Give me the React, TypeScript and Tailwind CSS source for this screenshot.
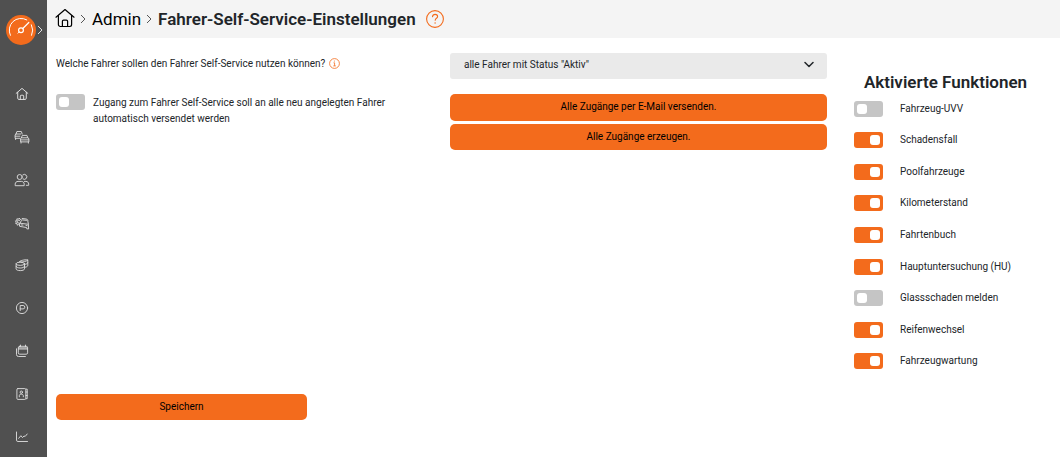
import { useState, type ReactNode } from "react";

const features = [
  { label: "Fahrzeug-UVV", active: false },
  { label: "Schadensfall", active: true },
  { label: "Poolfahrzeuge", active: true },
  { label: "Kilometerstand", active: true },
  { label: "Fahrtenbuch", active: true },
  { label: "Hauptuntersuchung (HU)", active: true },
  { label: "Glassschaden melden", active: false },
  { label: "Reifenwechsel", active: true },
  { label: "Fahrzeugwartung", active: true },
];

function HomeShape() {
  return (
    <>
      <path d="M1 9.2 10 1.5l9 7.7" />
      <path d="M3.4 7.6v9a1.9 1.9 0 0 0 1.9 1.9h9.4a1.9 1.9 0 0 0 1.9-1.9v-9" />
      <path d="M7.4 18.5v-5.2a1.2 1.2 0 0 1 1.2-1.2h2.8a1.2 1.2 0 0 1 1.2 1.2v5.2" />
    </>
  );
}

const navigation: { label: string; icon: ReactNode }[] = [
  { label: "Start", icon: <g transform="translate(1.5 1.4) scale(.65)" strokeWidth="1.5"><HomeShape /></g> },
  {
    label: "Fahrzeuge",
    icon: (
      <>
        <path d="m2 5-.9.9v3.4h4.5M2 5l.9-2.5h4.4L8.2 5M2 5h4.8M1.6 9.3v1.2M1.3 7.2h4.6" />
        <path d="m7.4 8.8.9-2.4h4.6l.9 2.4M7.4 8.8h6.4l1.1.9v3.2H6.6V9.7ZM7 12.9v1.2m7.4-1.2v1.2M7 10.9h7.6" />
      </>
    ),
  },
  {
    label: "Fahrer",
    icon: (
      <>
        <circle cx="5.7" cy="5" r="2.5" />
        <path d="M8.8 2.9A2.5 2.5 0 1 1 9 7" />
        <path d="M1.2 13.3v-1.2c0-1.6 1.2-2.7 2.8-2.7h3.4c1.6 0 2.8 1.1 2.8 2.7v1.2Z" />
        <path d="M10.4 9.4h1.5c1.7 0 2.8 1.1 2.8 2.7v1.2h-2.4" />
      </>
    ),
  },
  {
    label: "Wartung",
    icon: (
      <>
        <path d="m7 4.5-1.1-.2-.6-1.3-.9 1.2-1.5-.4-.1 1.5-1.4.6.9 1.2-.7 1.3 1.5.3.2 1.5 1.4-.7.9.9" />
        <path d="M5.9 5.8a1.5 1.5 0 1 0-1 2.3" />
        <path d="m6 8.2 1.4-2.7q.3-.7 1-.6l4.4.5q.8.1 1 .8l.6 2.8M6 8.2l8.4 1.1.2 4.7-1.8-.2-.2-1.3-5.6-.9-1-.2Z" />
        <path d="m7.4 9.9 1.5.2m3.1.4 1.2.2M8.2 3.5l4.6.6 1.1 1.2" />
      </>
    ),
  },
  {
    label: "Kosten",
    icon: (
      <>
        <ellipse cx="6.3" cy="6.8" rx="4.2" ry="1.6" />
        <path d="M2.1 6.8v5.1c0 1 1.9 1.7 4.2 1.7s4.2-.7 4.2-1.7V6.8M2.1 9.3c0 1 1.9 1.7 4.2 1.7s4.2-.7 4.2-1.7" />
        <path d="M5.3 4.6c.4-.8 5-2.2 8.5-1.7v5.5c0 .9-1 1.6-2.4 1.8M6 4.9c2.6.5 6.5-.4 7.8-1.8M11.2 7.3c1.5-.2 2.6-.8 2.6-1.5" />
      </>
    ),
  },
  {
    label: "Parken",
    icon: (
      <>
        <circle cx="8" cy="8" r="5.6" />
        <path d="M6.2 10.6V5.5h2.9a1.7 1.7 0 0 1 0 3.4H6.2" />
      </>
    ),
  },
  {
    label: "Kalender",
    icon: (
      <>
        <rect x="4.3" y="3.3" width="9.3" height="7.9" rx="1.4" />
        <path d="M4.5 4.9h8.9M4.5 6h8.9M6.5 2.1v1.4m5-1.4v1.4M2.5 5.8v5.7a2 2 0 0 0 2 2h6.9" />
      </>
    ),
  },
  {
    label: "Kontakte",
    icon: (
      <>
        <rect x="2.9" y="2.6" width="8.9" height="10.8" rx="1" />
        <path d="M12.2 3.1h1v9.6h-1M12 6h1.2M12 9.5h1.2" />
        <circle cx="7.3" cy="6.2" r="1.2" />
        <path d="M5.3 10.8V9.6c0-.8.6-1.4 2-1.4s2 .6 2 1.4v1.2" />
      </>
    ),
  },
  {
    label: "Auswertungen",
    icon: <path d="M2.5 3v8.1q0 1.4 1.4 1.4h9.6M4.7 9.3l2.2-2.6 1.6 1.9 1.6-1.7.9.7L13.2 5" />,
  },
];

function ChevronRight() {
  return (
    <svg className="h-2.5 w-1.5 shrink-0" viewBox="0 0 6 10" fill="none" stroke="currentColor" aria-hidden="true">
      <path d="m1 1 4 4-4 4" />
    </svg>
  );
}

function Separator() {
  return (
    <span className="pr-1.5 pl-[5px] text-[#555]">
      <ChevronRight />
    </span>
  );
}

function Switch({ id, initial }: { id: string; initial: boolean }) {
  const [checked, setChecked] = useState(initial);
  return (
    <span className="relative flex h-4 w-[29px] shrink-0">
      <input
        id={id}
        type="checkbox"
        role="switch"
        checked={checked}
        onChange={() => setChecked(!checked)}
        className="peer h-4 w-[29px] cursor-pointer appearance-none rounded-[3px] bg-[#c5c5c5] checked:bg-[#f36b1c]"
      />
      <span className="pointer-events-none absolute top-[3px] left-[3px] size-2.5 rounded-[3px] bg-white peer-checked:left-4" />
    </span>
  );
}

const buttonClass =
  "flex w-full cursor-pointer items-center justify-center rounded-[5px] text-black bg-[#f36b1c] hover:bg-[#e26014]";

export default function App() {
  return (
    <div className="flex min-h-screen bg-white font-['Roboto','Noto_Sans',sans-serif] text-[10px] leading-4 text-[#212529]">
      <aside className="w-[47px] shrink-0 bg-[#505050] text-[#e0e0e0]">
        <div className="flex h-[73px] items-start pt-[15px] pl-1.5">
          <a href="#dashboard" aria-label="Dashboard">
            <svg className="size-[30px]" viewBox="0 0 30 30" fill="none" stroke="#fff" strokeLinecap="round">
              <circle cx="15" cy="15" r="15" fill="#f36b1c" stroke="none" />
              <path d="M4.4 20.3A11.8 11.8 0 0 1 20.8 4.9M25.4 9.8a11.8 11.8 0 0 1 .2 10.5" />
              <circle cx="15" cy="15.3" r="2.4" strokeWidth="1.2" />
              <path d="m16.8 13.5 6-6" strokeWidth="1.2" />
              <path d="m13.2 17-1.2 1.2" />
            </svg>
          </a>
          <button type="button" aria-label="Menü öffnen" className="flex h-[30px] cursor-pointer items-center pl-px">
            <ChevronRight />
          </button>
        </div>
        <nav aria-label="Hauptmenü" className="grid h-[385px] auto-rows-fr pr-[3px]">
          {navigation.map((item) => (
            <a key={item.label} href="#" aria-label={item.label} className="flex items-center justify-center">
              <svg
                className="size-4"
                viewBox="0 0 16 16"
                fill="none"
                stroke="currentColor"
                strokeWidth=".9"
                strokeLinecap="round"
                strokeLinejoin="round"
              >
                {item.icon}
              </svg>
            </a>
          ))}
        </nav>
      </aside>

      <div className="min-w-0 flex-1">
        <header className="flex h-[38px] items-center bg-[#f4f4f4] pl-2">
          <a href="#home" aria-label="Startseite" className="text-black">
            <svg
              className="size-5"
              viewBox="0 0 20 20"
              fill="none"
              stroke="currentColor"
              strokeWidth="1.2"
              strokeLinecap="round"
              strokeLinejoin="round"
            >
              <g transform="translate(0 -1)"><HomeShape /></g>
            </svg>
          </a>
          <Separator />
          <a href="#admin" className="text-[17px] text-black">Admin</a>
          <Separator />
          <h1 className="text-[17px] font-semibold">Fahrer-Self-Service-Einstellungen</h1>
          <button type="button" aria-label="Hilfe" className="ml-2.5 cursor-pointer">
            <svg className="size-[18px]" viewBox="0 0 18 18" fill="none" stroke="#f36b1c" strokeLinecap="round">
              <circle cx="9" cy="9" r="8.4" strokeWidth="1.1" />
              <path d="M6.5 6.7c.2-1.5 1.2-2.3 2.6-2.3 1.5 0 2.5.8 2.5 2.1 0 1.8-2.4 1.8-2.4 3.8" strokeWidth="1.1" />
              <circle cx="9.1" cy="13" r=".7" fill="#f36b1c" stroke="none" />
            </svg>
          </button>
        </header>

        <main className="pt-[15px] pr-[23px] pl-[9px]">
          <form onSubmit={(event) => event.preventDefault()}>
            <div className="grid grid-cols-[394fr_404fr_183fr]">
              <div>
                <div className="flex h-[41px] items-start pt-[3px]">
                  <label htmlFor="driver-scope">Welche Fahrer sollen den Fahrer Self-Service nutzen können?</label>
                  <button type="button" aria-label="Information" className="mt-0.5 ml-1 cursor-pointer">
                    <svg className="size-[11px]" viewBox="0 0 11 11" fill="none" stroke="#f36b1c" strokeWidth=".8">
                      <circle cx="5.5" cy="5.5" r="4.9" />
                      <path d="M4.5 4.8h1.1v3M4.3 7.9h2.5M5.4 2.6v1" />
                    </svg>
                  </button>
                </div>
                <div className="flex gap-2">
                  <Switch id="auto-send" initial={false} />
                  <label htmlFor="auto-send" className="max-w-[300px] pt-px">
                    Zugang zum Fahrer Self-Service soll an alle neu angelegten Fahrer automatisch versendet werden
                  </label>
                </div>
              </div>

              <div className="pr-[27px]">
                <div className="relative">
                  <select
                    id="driver-scope"
                    className="block h-[26px] w-full appearance-none rounded-[3px] bg-[#eaeaea] pr-8 pb-[3px] pl-3.5"
                  >
                    <option>alle Fahrer mit Status "Aktiv"</option>
                  </select>
                  <svg
                    className="pointer-events-none absolute top-2 right-[13px] h-[7px] w-2.5"
                    viewBox="0 0 10 7"
                    fill="none"
                    stroke="#212529"
                    strokeWidth="1.5"
                    strokeLinecap="round"
                    strokeLinejoin="round"
                    aria-hidden="true"
                  >
                    <path d="m1 1.5 4 4 4-4" />
                  </svg>
                </div>
                <div className="mt-[15px] space-y-[3px]">
                  <button type="button" className={`${buttonClass} h-[27px] pb-0.5`}>Alle Zugänge per E-Mail versenden.</button>
                  <button type="button" className={`${buttonClass} h-[26px]`}>Alle Zugänge erzeugen.</button>
                </div>
              </div>

              <section className="pt-[19px]">
                <h2 className="text-center text-[17px] leading-5 font-semibold whitespace-nowrap">Aktivierte Funktionen</h2>
                <ul className="mt-px grid h-[284px] auto-rows-fr">
                  {features.map((feature, index) => (
                    <li key={feature.label} className="flex items-center gap-[17px]">
                      <Switch id={`feature-${index}`} initial={feature.active} />
                      <label htmlFor={`feature-${index}`}>{feature.label}</label>
                    </li>
                  ))}
                </ul>
              </section>
            </div>
            <div className="mt-[17px] w-[251px] pb-4">
              <button type="submit" className={`${buttonClass} h-[26px]`}>Speichern</button>
            </div>
          </form>
        </main>
      </div>
    </div>
  );
}
